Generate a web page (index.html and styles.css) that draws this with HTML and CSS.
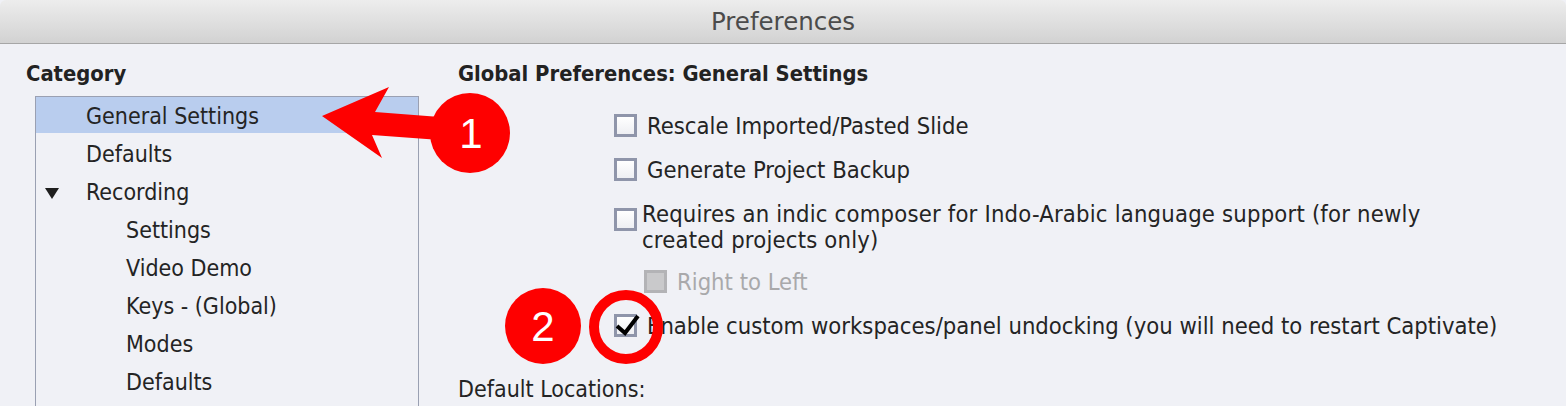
FILE: index.html
```html
<!DOCTYPE html>
<html>
<head>
<meta charset="utf-8">
<title>Preferences</title>
<link rel="stylesheet" href="styles.css">
</head>
<body>
<div class="window">
  <div class="titlebar">Preferences</div>
  <div class="main">
    <div class="left">
      <div class="heading">Category</div>
      <div class="listbox">
        <div class="row sel lvl1">General Settings</div>
        <div class="row lvl1">Defaults</div>
        <div class="row lvl1"><span class="tri"></span>Recording</div>
        <div class="row lvl2">Settings</div>
        <div class="row lvl2">Video Demo</div>
        <div class="row lvl2">Keys - (Global)</div>
        <div class="row lvl2">Modes</div>
        <div class="row lvl2">Defaults</div>
      </div>
    </div>
    <div class="right">
      <div class="heading">Global Preferences: General Settings</div>
      <div class="options">
        <div class="opt r1"><span class="cb"></span><span class="lbl">Rescale Imported/Pasted Slide</span></div>
        <div class="opt r2"><span class="cb"></span><span class="lbl">Generate Project Backup</span></div>
        <div class="opt r3"><span class="cb"></span><span class="lbl wide">Requires an indic composer for Indo-Arabic language support (for newly<br>created projects only)</span></div>
        <div class="opt r4 sub"><span class="cb dis"></span><span class="lbl dis">Right to Left</span></div>
        <div class="opt r5"><span class="cb checked"><svg class="tick" viewBox="0 0 30 30" width="30" height="30"><path d="M1 18 L9 25 L22 8" fill="none" stroke="#000" stroke-width="4" stroke-linejoin="miter"/></svg></span><span class="lbl">Enable custom workspaces/panel undocking (you will need to restart Captivate)</span></div>
      </div>
      <div class="plain">Default Locations:</div>
    </div>
  </div>
  <svg class="annot" width="1566" height="406" viewBox="0 0 1566 406">
    <polygon points="322,116 389,87 375,112 440,117 440,140 372,135 382,158" fill="#fe0000"/>
    <circle cx="470" cy="133" r="40" fill="#fe0000"/>
    <text x="471" y="148" class="num">1</text>
    <circle cx="543" cy="326" r="38" fill="#fe0000"/>
    <text x="543" y="341" class="num">2</text>
    <circle cx="626" cy="327" r="32" fill="none" stroke="#fe0000" stroke-width="10"/>
  </svg>
</div>
</body>
</html>
```
FILE: styles.css
```css
html, body {
  margin: 0;
  padding: 0;
  background: #f0f1f6;
}
body {
  font-family: "DejaVu Sans Condensed", "DejaVu Sans", "Liberation Sans", sans-serif;
  color: #242424;
  width: 1566px;
  height: 406px;
  overflow: hidden;
}
.window {
  position: relative;
  width: 1566px;
  height: 406px;
  overflow: hidden;
}
.titlebar {
  height: 43px;
  border-bottom: 1px solid #a6a6a6;
  background: linear-gradient(#ededed, #d2d2d2);
  border-radius: 6px 6px 0 0;
  text-align: center;
  line-height: 44px;
  font-family: "DejaVu Sans", sans-serif;
  font-size: 24.5px;
  color: #4b4b4b;
}
.main {
  display: flex;
}
.left {
  width: 432px;
  padding-left: 26px;
  padding-top: 18px;
  flex: none;
}
.heading {
  font-family: "DejaVu Sans Condensed", "DejaVu Sans", sans-serif;
  font-weight: bold;
  font-size: 21.8px;
  line-height: 24px;
  height: 24px;
  color: #222;
}
.listbox {
  margin-top: 10px;
  margin-left: 9px;
  width: 382px;
  height: 400px;
  border: 1px solid #9aa0b2;
  border-bottom: none;
  background: #f0f1f6;
}
.row {
  height: 38px;
  line-height: 38px;
  font-size: 23px;
  position: relative;
  white-space: nowrap;
}
.row.sel {
  background: linear-gradient(#b9cdee 0 36px, transparent 36px);
}
.lvl1 { padding-left: 50px; }
.lvl2 { padding-left: 90px; }
.tri {
  position: absolute;
  left: 9px;
  top: 15px;
  width: 0;
  height: 0;
  border-left: 7px solid transparent;
  border-right: 7px solid transparent;
  border-top: 11px solid #1e1e1e;
}
.right {
  flex: 1;
  padding-top: 18px;
}
.options {
  padding-left: 156px;
  padding-top: 28px;
}
.opt {
  display: flex;
  align-items: flex-start;
  font-size: 23.6px;
  line-height: 24px;
  white-space: nowrap;
}
.lbl.wide { letter-spacing: 0.2px; }
.cb {
  flex: none;
  box-sizing: border-box;
  width: 23px;
  height: 23px;
  border: 3px solid #8f95aa;
  background: linear-gradient(#ffffff, #eeeff3);
  margin-right: 10px;
  position: relative;
}
.cb.dis {
  border-color: #b3b3b6;
  background: #c9c9cb;
}
.lbl.dis { color: #a9a9ab; }
.r2 { margin-top: 20px; }
.r3 { margin-top: 19px; line-height: 26px; }
.r3 .cb { margin-top: 7px; margin-right: 5px; }
.r4 { margin-top: 17px; padding-left: 30px; }
.r5 { margin-top: 20px; }
.tick {
  position: absolute;
  left: -1px;
  top: -9px;
  overflow: visible;
}
.plain {
  margin-top: 39px;
  font-size: 23px;
  line-height: 24px;
}
.annot {
  position: absolute;
  left: 0;
  top: 0;
  pointer-events: none;
}
.num {
  fill: #ffffff;
  font-family: "Liberation Sans", Arial, sans-serif;
  font-size: 42px;
  text-anchor: middle;
}
```
